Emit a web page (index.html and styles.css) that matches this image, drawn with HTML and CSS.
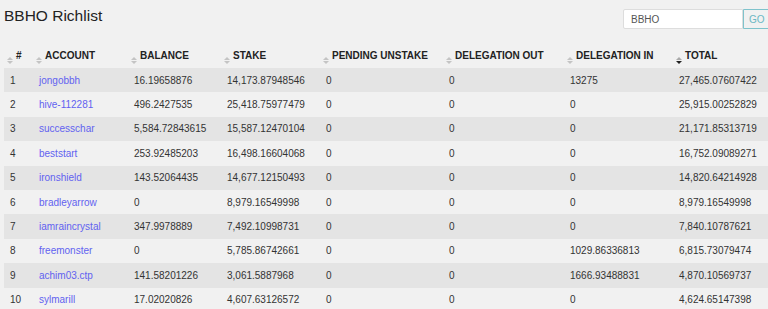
FILE: index.html
```html
<!DOCTYPE html>
<html lang="en">
<head>
    <meta charset="UTF-8" />
    <meta name="viewport" content="width=device-width, initial-scale=1.0"/>
    <title>BBHO Richlist</title>
    <link rel="stylesheet" href="styles.css">
</head>
<body>

<div class="page-header">
    <h1>BBHO Richlist</h1>
    <form class="search-form">
        <input type="text" name="token" value="BBHO" />
        <button type="submit">GO</button>
    </form>
</div>

<table class="richlist">
    <colgroup>
        <col style="width: 29px">
        <col style="width: 95px">
        <col style="width: 93px">
        <col style="width: 99px">
        <col style="width: 123px">
        <col style="width: 121px">
        <col style="width: 109px">
        <col style="width: 95px">
    </colgroup>
    <thead>
        <tr>
            <th><span class="sort"><i class="up"></i><i class="down"></i></span>#</th>
            <th><span class="sort"><i class="up"></i><i class="down"></i></span>Account</th>
            <th><span class="sort"><i class="up"></i><i class="down"></i></span>Balance</th>
            <th><span class="sort"><i class="up"></i><i class="down"></i></span>Stake</th>
            <th><span class="sort"><i class="up"></i><i class="down"></i></span>Pending Unstake</th>
            <th><span class="sort"><i class="up"></i><i class="down"></i></span>Delegation Out</th>
            <th><span class="sort"><i class="up"></i><i class="down"></i></span>Delegation In</th>
            <th><span class="sort active"><i class="up"></i><i class="down"></i></span>Total</th>
        </tr>
    </thead>
    <tbody>
        <tr><td>1</td><td><a href="#">jongobbh</a></td><td>16.19658876</td><td>14,173.87948546</td><td>0</td><td>0</td><td>13275</td><td>27,465.07607422</td></tr>
        <tr><td>2</td><td><a href="#">hive-112281</a></td><td>496.2427535</td><td>25,418.75977479</td><td>0</td><td>0</td><td>0</td><td>25,915.00252829</td></tr>
        <tr><td>3</td><td><a href="#">successchar</a></td><td>5,584.72843615</td><td>15,587.12470104</td><td>0</td><td>0</td><td>0</td><td>21,171.85313719</td></tr>
        <tr><td>4</td><td><a href="#">beststart</a></td><td>253.92485203</td><td>16,498.16604068</td><td>0</td><td>0</td><td>0</td><td>16,752.09089271</td></tr>
        <tr><td>5</td><td><a href="#">ironshield</a></td><td>143.52064435</td><td>14,677.12150493</td><td>0</td><td>0</td><td>0</td><td>14,820.64214928</td></tr>
        <tr><td>6</td><td><a href="#">bradleyarrow</a></td><td>0</td><td>8,979.16549998</td><td>0</td><td>0</td><td>0</td><td>8,979.16549998</td></tr>
        <tr><td>7</td><td><a href="#">iamraincrystal</a></td><td>347.9978889</td><td>7,492.10998731</td><td>0</td><td>0</td><td>0</td><td>7,840.10787621</td></tr>
        <tr><td>8</td><td><a href="#">freemonster</a></td><td>0</td><td>5,785.86742661</td><td>0</td><td>0</td><td>1029.86336813</td><td>6,815.73079474</td></tr>
        <tr><td>9</td><td><a href="#">achim03.ctp</a></td><td>141.58201226</td><td>3,061.5887968</td><td>0</td><td>0</td><td>1666.93488831</td><td>4,870.10569737</td></tr>
        <tr><td>10</td><td><a href="#">sylmarill</a></td><td>17.02020826</td><td>4,607.63126572</td><td>0</td><td>0</td><td>0</td><td>4,624.65147398</td></tr>
    </tbody>
</table>

</body>
</html>
```

FILE: styles.css
```css
* {
    box-sizing: border-box;
}

body {
    margin: 0;
    padding: 0 0 0 4px;
    background-color: #f1f1f1;
    font-family: 'Liberation Sans Narrow', 'Liberation Sans', Arial, sans-serif;
    color: #333;
    overflow: hidden;
}

.page-header {
    display: flex;
    justify-content: space-between;
    align-items: flex-start;
    height: 43px;
}

h1 {
    margin: 0;
    padding-top: 7px;
    font-family: 'Liberation Sans', Arial, sans-serif;
    font-size: 15.5px;
    font-weight: normal;
    color: #222;
}

.search-form {
    display: flex;
    margin-top: 9px;
    margin-right: -8px;
}

.search-form input {
    width: 120px;
    height: 20px;
    padding: 0 7px;
    border: 1px solid #ddd;
    border-radius: 2px 0 0 2px;
    background-color: #fff;
    font-family: 'Liberation Sans Narrow', 'Liberation Sans', Arial, sans-serif;
    font-size: 10px;
    color: #555;
}

.search-form button {
    width: 33px;
    height: 20px;
    padding: 0 0 0 5px;
    text-align: left;
    border: 1px solid #7fc3cc;
    border-radius: 0 2px 2px 0;
    background-color: #f1f1f1;
    color: #6bb8c4;
    font-family: 'Liberation Sans Narrow', 'Liberation Sans', Arial, sans-serif;
    font-size: 10px;
}

.richlist {
    table-layout: fixed;
    width: 764px;
    border-collapse: collapse;
    font-size: 10px;
}

.richlist th {
    height: 25px;
    padding: 3px 0 0 3px;
    text-align: left;
    text-transform: uppercase;
    font-weight: bold;
    color: #222;
    white-space: nowrap;
}

.richlist td {
    height: 24.4px;
    padding: 0 0 0 6px;
    white-space: nowrap;
}

.richlist tbody tr:nth-child(odd) {
    background-color: #e4e4e4;
}

.richlist a {
    color: #6262f0;
    text-decoration: none;
}

.sort {
    display: inline-flex;
    flex-direction: column;
    gap: 1px;
    vertical-align: -1px;
    margin-right: 3px;
}

.sort i {
    display: block;
    width: 0;
    height: 0;
    border-left: 3px solid transparent;
    border-right: 3px solid transparent;
}

.sort .up {
    border-bottom: 3px solid #c4c4c4;
}

.sort .down {
    border-top: 3px solid #c4c4c4;
}

.sort.active .up {
    border-bottom-color: #aaa;
}

.sort.active .down {
    border-top-color: #222;
}
```
